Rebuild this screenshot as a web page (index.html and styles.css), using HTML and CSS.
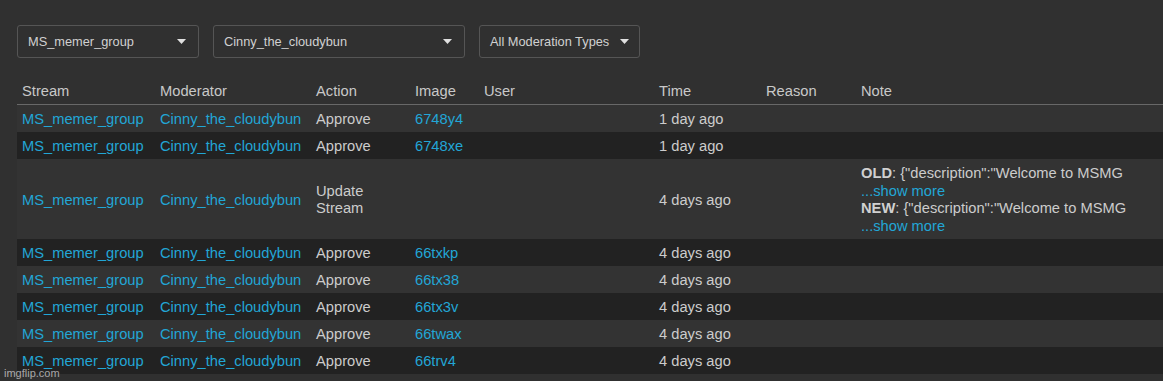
FILE: index.html
```html
<!DOCTYPE html>
<html lang="en">
<head>
    <meta charset="UTF-8">
    <title>Moderation Log</title>
    <link rel="stylesheet" href="styles.css">
</head>
<body>
    <div class="page">
        <div class="filters">
            <div class="dropdown stream-filter">
                <span>MS_memer_group</span>
                <svg class="caret" width="9" height="5" viewBox="0 0 9 5"><path d="M0 0h9L4.5 5z"/></svg>
            </div>
            <div class="dropdown mod-filter">
                <span>Cinny_the_cloudybun</span>
                <svg class="caret" width="9" height="5" viewBox="0 0 9 5"><path d="M0 0h9L4.5 5z"/></svg>
            </div>
            <div class="dropdown type-filter">
                <span>All Moderation Types</span>
                <svg class="caret" width="9" height="5" viewBox="0 0 9 5"><path d="M0 0h9L4.5 5z"/></svg>
            </div>
        </div>

        <table class="mod-log">
            <colgroup>
                <col class="c-stream">
                <col class="c-mod">
                <col class="c-action">
                <col class="c-image">
                <col class="c-user">
                <col class="c-time">
                <col class="c-reason">
                <col class="c-note">
            </colgroup>
            <thead>
                <tr>
                    <th>Stream</th>
                    <th>Moderator</th>
                    <th>Action</th>
                    <th>Image</th>
                    <th>User</th>
                    <th>Time</th>
                    <th>Reason</th>
                    <th>Note</th>
                </tr>
            </thead>
            <tbody>
                <tr>
                    <td><a href="#">MS_memer_group</a></td>
                    <td><a href="#">Cinny_the_cloudybun</a></td>
                    <td>Approve</td>
                    <td><a href="#">6748y4</a></td>
                    <td></td>
                    <td>1 day ago</td>
                    <td></td>
                    <td></td>
                </tr>
                <tr>
                    <td><a href="#">MS_memer_group</a></td>
                    <td><a href="#">Cinny_the_cloudybun</a></td>
                    <td>Approve</td>
                    <td><a href="#">6748xe</a></td>
                    <td></td>
                    <td>1 day ago</td>
                    <td></td>
                    <td></td>
                </tr>
                <tr>
                    <td><a href="#">MS_memer_group</a></td>
                    <td><a href="#">Cinny_the_cloudybun</a></td>
                    <td>Update Stream</td>
                    <td></td>
                    <td></td>
                    <td>4 days ago</td>
                    <td></td>
                    <td class="note">
                        <b>OLD</b>: {"description":"Welcome to MSMG<br>
                        <a href="#">...show more</a><br>
                        <b>NEW</b>: {"description":"Welcome to MSMG<br>
                        <a href="#">...show more</a>
                    </td>
                </tr>
                <tr>
                    <td><a href="#">MS_memer_group</a></td>
                    <td><a href="#">Cinny_the_cloudybun</a></td>
                    <td>Approve</td>
                    <td><a href="#">66txkp</a></td>
                    <td></td>
                    <td>4 days ago</td>
                    <td></td>
                    <td></td>
                </tr>
                <tr>
                    <td><a href="#">MS_memer_group</a></td>
                    <td><a href="#">Cinny_the_cloudybun</a></td>
                    <td>Approve</td>
                    <td><a href="#">66tx38</a></td>
                    <td></td>
                    <td>4 days ago</td>
                    <td></td>
                    <td></td>
                </tr>
                <tr>
                    <td><a href="#">MS_memer_group</a></td>
                    <td><a href="#">Cinny_the_cloudybun</a></td>
                    <td>Approve</td>
                    <td><a href="#">66tx3v</a></td>
                    <td></td>
                    <td>4 days ago</td>
                    <td></td>
                    <td></td>
                </tr>
                <tr>
                    <td><a href="#">MS_memer_group</a></td>
                    <td><a href="#">Cinny_the_cloudybun</a></td>
                    <td>Approve</td>
                    <td><a href="#">66twax</a></td>
                    <td></td>
                    <td>4 days ago</td>
                    <td></td>
                    <td></td>
                </tr>
                <tr>
                    <td><a href="#">MS_memer_group</a></td>
                    <td><a href="#">Cinny_the_cloudybun</a></td>
                    <td>Approve</td>
                    <td><a href="#">66trv4</a></td>
                    <td></td>
                    <td>4 days ago</td>
                    <td></td>
                    <td></td>
                </tr>
            </tbody>
        </table>
    </div>
    <div class="watermark">imgflip.com</div>
</body>
</html>
```

FILE: styles.css
```css
body {
    margin: 0;
    background: #303030;
    color: #cccccc;
    font-family: "Liberation Sans", Arial, sans-serif;
    overflow: hidden;
}

.page {
    padding: 25px 0 0 17px;
}

/* filter dropdowns */
.filters {
    display: flex;
    gap: 14px;
}

.dropdown {
    display: flex;
    align-items: center;
    justify-content: space-between;
    box-sizing: border-box;
    height: 33px;
    padding: 0 12px 0 10px;
    border: 1px solid #555;
    border-radius: 3px;
    font-size: 12.8px;
    color: #d0d0d0;
}

.stream-filter { width: 182px; }
.mod-filter { width: 252px; }
.type-filter {
    width: 161px;
    gap: 8px;
    padding-right: 10px;
}

.caret {
    fill: #e0e0e0;
    flex: none;
}

/* log table */
.mod-log {
    margin-top: 20px;
    width: 1146px;
    border-collapse: collapse;
    table-layout: fixed;
    font-size: 14.7px;
    line-height: 17px;
}

.c-stream { width: 138px; }
.c-mod { width: 156px; }
.c-action { width: 99px; }
.c-image { width: 69px; }
.c-user { width: 175px; }
.c-time { width: 107px; }
.c-reason { width: 95px; }

.mod-log th {
    text-align: left;
    font-weight: normal;
    color: #c8c8c8;
    padding: 5px 5px 4px;
    border-bottom: 1px solid #686868;
}

.mod-log td {
    padding: 6px 5px 4px;
    vertical-align: middle;
    white-space: nowrap;
}

.mod-log tbody tr:nth-child(odd) { background: #333333; }
.mod-log tbody tr:nth-child(even) { background: #222222; }

.mod-log td:nth-child(3) { white-space: normal; }

.mod-log td.note {
    line-height: 17.5px;
}

.mod-log a {
    color: #22a6d6;
    text-decoration: none;
}

.note b {
    color: #d0d0d0;
}

.watermark {
    position: absolute;
    left: 4px;
    bottom: 2px;
    font-family: "Liberation Sans", Arial, sans-serif;
    font-size: 11px;
    color: rgba(255, 255, 255, 0.6);
}
```
